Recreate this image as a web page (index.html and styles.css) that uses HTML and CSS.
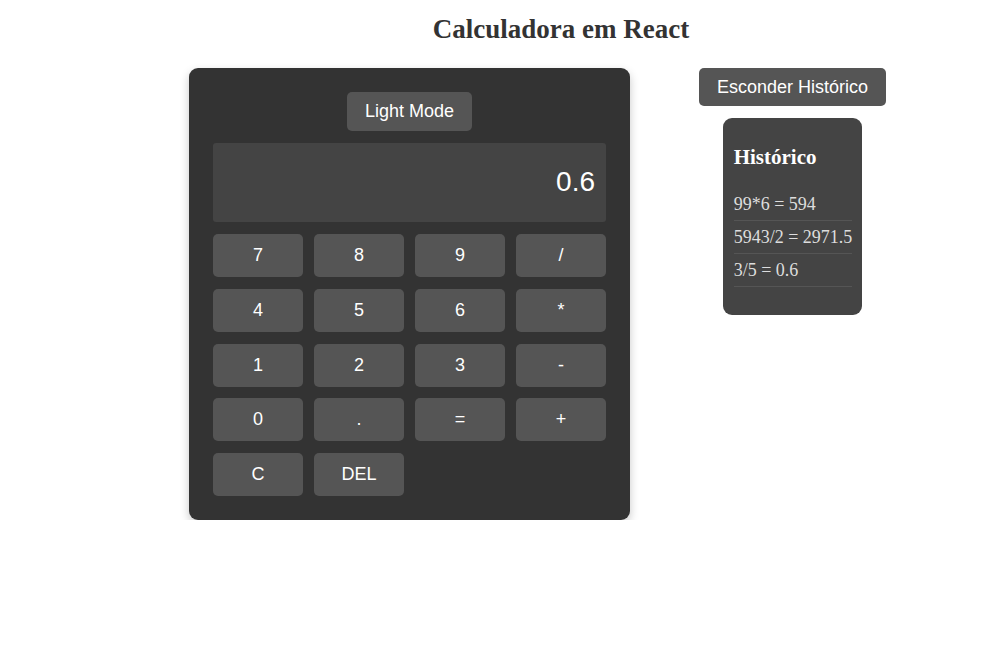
FILE: index.html
```html
<!DOCTYPE html>
<html lang="pt">
<head>
<meta charset="utf-8">
<title>Calculadora em React</title>
<link rel="stylesheet" href="styles.css">
</head>
<body>
<h1 class="title">Calculadora em React</h1>
<div class="main">
  <div class="calculator">
    <div class="mode-row"><button class="btn mode-btn">Light Mode</button></div>
    <div class="display">0.6</div>
    <div class="keys">
      <button class="btn key">7</button>
      <button class="btn key">8</button>
      <button class="btn key">9</button>
      <button class="btn key">/</button>
      <button class="btn key">4</button>
      <button class="btn key">5</button>
      <button class="btn key">6</button>
      <button class="btn key">*</button>
      <button class="btn key">1</button>
      <button class="btn key">2</button>
      <button class="btn key">3</button>
      <button class="btn key">-</button>
      <button class="btn key">0</button>
      <button class="btn key">.</button>
      <button class="btn key">=</button>
      <button class="btn key">+</button>
      <button class="btn key">C</button>
      <button class="btn key">DEL</button>
    </div>
  </div>
  <div class="history-col">
    <button class="btn toggle-btn">Esconder Histórico</button>
    <div class="history">
      <h3 class="history-title">Histórico</h3>
      <ul class="history-list">
        <li>99*6 = 594</li>
        <li>5943/2 = 2971.5</li>
        <li>3/5 = 0.6</li>
      </ul>
    </div>
  </div>
</div>
</body>
</html>
```

FILE: styles.css
```css
body {
  margin: 0;
  background: #fff;
  font-family: "Liberation Sans", Arial, sans-serif;
}

.title {
  margin: 14px 0 23px;
  padding-left: 126px;
  text-align: center;
  font-family: "Liberation Serif", "Times New Roman", serif;
  font-weight: bold;
  font-size: 27px;
  color: #333;
}

.main {
  display: flex;
  align-items: flex-start;
  gap: 69px;
  padding-left: 189px;
}

.calculator {
  width: 393px;
  padding: 24px;
  background: #333;
  border-radius: 9px;
  box-shadow: 0 4px 10px rgba(0, 0, 0, 0.22);
}

.btn {
  border: none;
  background: #555;
  color: #fff;
  font-family: "Liberation Sans", Arial, sans-serif;
  font-size: 18px;
  border-radius: 5px;
  cursor: pointer;
}

.mode-row {
  display: flex;
  justify-content: center;
  margin-bottom: 12px;
}

.mode-btn {
  padding: 9px 18px;
}

.display {
  height: 79px;
  box-sizing: border-box;
  padding: 0 11px 2px;
  background: #444;
  border-radius: 3px;
  display: flex;
  align-items: center;
  justify-content: flex-end;
  color: #fff;
  font-size: 28px;
  margin-bottom: 12px;
}

.keys {
  display: grid;
  grid-template-columns: repeat(4, 1fr);
  column-gap: 11px;
  row-gap: 11.75px;
}

.key {
  height: 43px;
  padding: 0;
}

.history-col {
  display: flex;
  flex-direction: column;
  align-items: center;
  gap: 12px;
}

.toggle-btn {
  height: 38px;
  padding: 0 18px;
}

.history {
  background: #444;
  border-radius: 9px;
  padding: 11px 10px 11px 11px;
  font-family: "Liberation Serif", "Times New Roman", serif;
}

.history-title {
  margin: 15.5px 0 18px;
  font-size: 21px;
  font-weight: bold;
  color: #fff;
}

.history-list {
  list-style: none;
  margin: 0 0 17px;
  padding: 0;
}

.history-list li {
  padding: 6px 0;
  line-height: 20.3px;
  font-size: 18px;
  color: #ddd;
  border-bottom: 1px solid #555;
}
```
